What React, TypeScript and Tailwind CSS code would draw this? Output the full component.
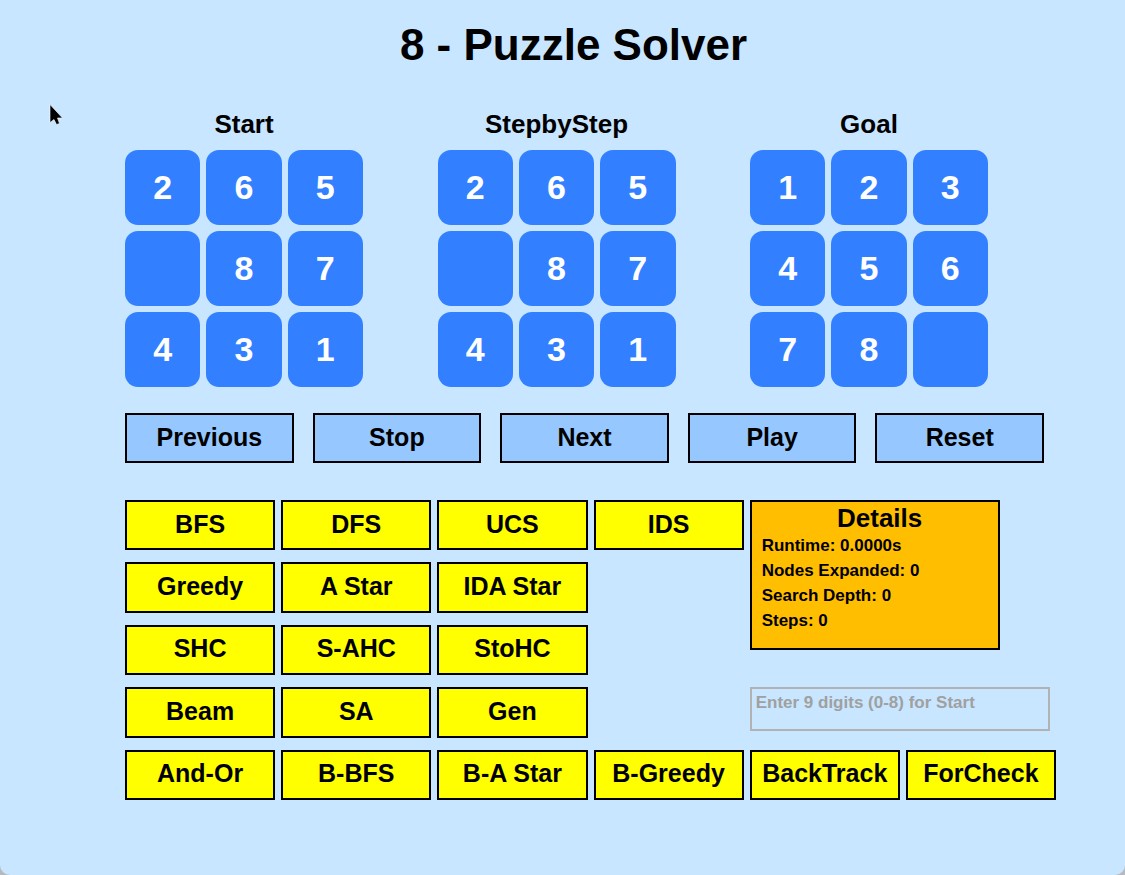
type Tile = number | null;

const START: Tile[] = [2, 6, 5, null, 8, 7, 4, 3, 1];
const GOAL: Tile[] = [1, 2, 3, 4, 5, 6, 7, 8, null];

const BOARDS = [
  { title: "Start", tiles: START },
  { title: "StepbyStep", tiles: START },
  { title: "Goal", tiles: GOAL },
];

const CONTROLS = ["Previous", "Stop", "Next", "Play", "Reset"];

const ALGORITHM_ROWS = [
  ["BFS", "DFS", "UCS", "IDS"],
  ["Greedy", "A Star", "IDA Star"],
  ["SHC", "S-AHC", "StoHC"],
  ["Beam", "SA", "Gen"],
  ["And-Or", "B-BFS", "B-A Star", "B-Greedy", "BackTrack", "ForCheck"],
];

const DETAILS = [
  ["Runtime", "0.0000s"],
  ["Nodes Expanded", "0"],
  ["Search Depth", "0"],
  ["Steps", "0"],
];

function Board({ title, tiles }: { title: string; tiles: Tile[] }) {
  return (
    <section className="w-[238px]">
      <h2 className="mb-3 text-center text-[26px] leading-7">{title}</h2>
      <div className="grid auto-rows-[75px] grid-cols-3 gap-1.5">
        {tiles.map((tile, i) => (
          <div
            key={i}
            className="flex items-center justify-center rounded-[13px] bg-[#3280ff] pb-0.5 text-[34px] leading-none text-white"
          >
            {tile}
          </div>
        ))}
      </div>
    </section>
  );
}

function AlgorithmButton({ name, first }: { name: string; first: boolean }) {
  return (
    <button
      type="button"
      className={
        "border-2 border-black bg-[#ffff00] pb-[3px] text-[25px] leading-7 whitespace-nowrap " +
        (first ? "col-start-1" : "")
      }
    >
      {name}
    </button>
  );
}

function Details() {
  return (
    <section className="col-span-2 col-start-5 row-span-3 row-start-1 h-[150px] w-[250px] border-2 border-black bg-[#ffbf00] pl-2.5">
      <h2 className="mt-0.5 text-center text-[26px] leading-7">Details</h2>
      <ul className="mt-px text-[17px] leading-[25px]">
        {DETAILS.map(([label, value]) => (
          <li key={label}>
            {label}: {value}
          </li>
        ))}
      </ul>
    </section>
  );
}

function Pointer() {
  return (
    <svg
      className="pointer-events-none absolute top-[103px] left-[49px]"
      width="15"
      height="23"
      viewBox="0 0 15 23"
      aria-hidden="true"
    >
      <path
        d="M1 1.5V19.5L5 16.5L7.5 21.5L10.5 20.5L8.5 15H13.5Z"
        fill="#000"
        stroke="#fff"
        strokeWidth="0.6"
      />
    </svg>
  );
}

export default function App() {
  return (
    <div className="bg-[#b4babf]">
      <main className="relative min-h-screen rounded-b-[10px] bg-[#c8e6ff] pt-5 pr-[69px] pb-[75px] pl-[125px] font-['Liberation_Sans',Arial,sans-serif] font-bold text-black">
        <h1 className="mr-[34px] text-center text-[44px] leading-[50px]">8 - Puzzle Solver</h1>

        <div className="mt-10 mr-[68px] flex justify-between">
          {BOARDS.map((board) => (
            <Board key={board.title} {...board} />
          ))}
        </div>

        <div className="mt-[26px] mr-3 grid grid-cols-5 gap-[19px]">
          {CONTROLS.map((name) => (
            <button
              key={name}
              type="button"
              className="h-[50px] border-2 border-black bg-[#96c8ff] pb-[3px] text-[25px] leading-7"
            >
              {name}
            </button>
          ))}
        </div>

        <div className="mt-[37px] grid min-h-[300px] grid-cols-6 grid-rows-5 gap-x-1.5 gap-y-3">
          {ALGORITHM_ROWS.map((row) =>
            row.map((name, i) => <AlgorithmButton key={name} name={name} first={i === 0} />),
          )}
          <Details />
          <input
            type="text"
            aria-label="Start digits"
            placeholder="Enter 9 digits (0-8) for Start"
            className="col-span-2 col-start-5 row-start-4 h-[44px] w-[300px] border-2 border-[#b2b2b2] px-1 pb-3 text-[17px] outline-none placeholder:text-[#a0a0a0] placeholder:opacity-100"
          />
        </div>

        <Pointer />
      </main>
    </div>
  );
}
